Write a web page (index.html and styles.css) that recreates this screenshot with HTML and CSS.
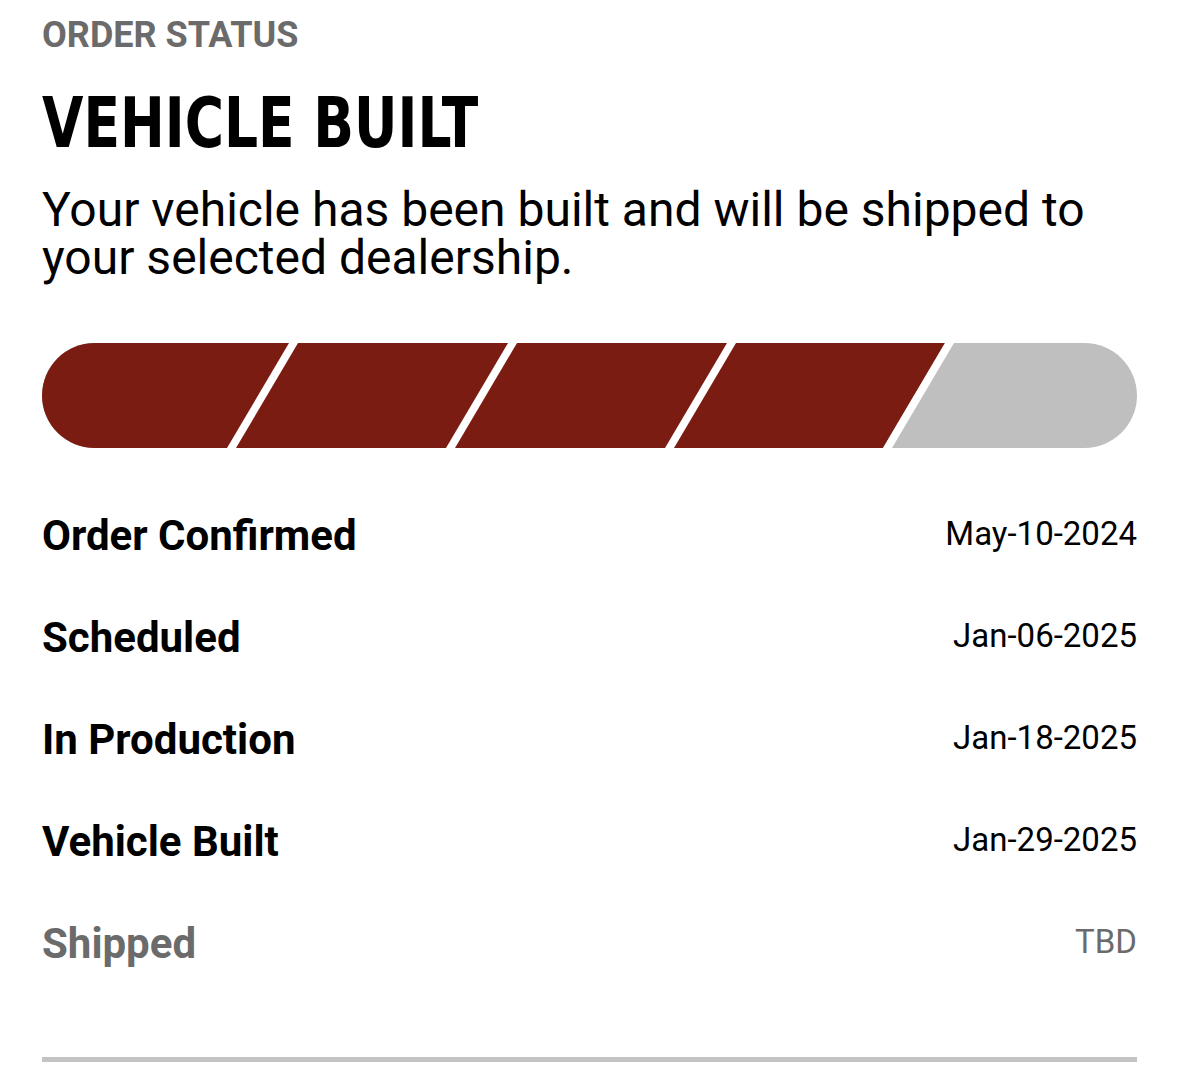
FILE: index.html
```html
<!DOCTYPE html>
<html>
<head>
  <title>Order Status</title>
  <meta charset="UTF-8">
  <link rel="stylesheet" href="styles.css">
</head>
<body>
  <div class="page">
    <div class="eyebrow">ORDER STATUS</div>
    <h1 class="status-title">VEHICLE BUILT</h1>
    <p class="status-text">Your vehicle has been built and will be shipped to your selected dealership.</p>

    <!-- progress: 4 of 5 steps done -->
    <div class="progress">
      <svg width="1095" height="105" viewBox="0 0 1095 105">
        <defs>
          <clipPath id="pill">
            <rect x="0" y="0" width="1095" height="105" rx="52.5" ry="52.5"/>
          </clipPath>
        </defs>
        <g clip-path="url(#pill)">
          <rect x="0" y="0" width="1095" height="105" fill="#bfbfbf"/>
          <polygon points="0,0 903,0 841,105 0,105" fill="#7b1c12"/>
          <polygon points="247,0 256,0 194,105 185,105" fill="#fff"/>
          <polygon points="466,0 475,0 413,105 404,105" fill="#fff"/>
          <polygon points="685,0 694,0 632,105 623,105" fill="#fff"/>
          <polygon points="903,0 912,0 850,105 841,105" fill="#fff"/>
        </g>
      </svg>
    </div>

    <div class="steps">
      <div class="step">
        <span class="step-name">Order Confirmed</span>
        <span class="step-date">May-10-2024</span>
      </div>
      <div class="step">
        <span class="step-name">Scheduled</span>
        <span class="step-date">Jan-06-2025</span>
      </div>
      <div class="step">
        <span class="step-name">In Production</span>
        <span class="step-date">Jan-18-2025</span>
      </div>
      <div class="step">
        <span class="step-name">Vehicle Built</span>
        <span class="step-date">Jan-29-2025</span>
      </div>
      <div class="step pending">
        <span class="step-name">Shipped</span>
        <span class="step-date">TBD</span>
      </div>
    </div>

    <div class="divider"></div>
  </div>
</body>
</html>
```

FILE: styles.css
```css
body {
  margin: 0;
  background: #fff;
  font-family: Roboto, "Noto Sans", sans-serif;
  color: #000;
}

.page {
  padding: 14px 42px 0 42px;
}

.eyebrow {
  font-size: 36px;
  font-weight: 700;
  color: #6b6b6b;
  line-height: 42px;
}

/* no narrow face installed, squeeze the condensed one */
.status-title {
  margin: 27px 0 0 0;
  font-family: "DejaVu Sans Condensed", "DejaVu Sans", sans-serif;
  font-size: 70px;
  font-weight: 700;
  line-height: 80px;
  transform: scaleX(0.85);
  transform-origin: left center;
}

.status-text {
  margin: 23px 0 0 0;
  font-size: 48px;
  line-height: 48px;
}

.progress {
  margin-top: 61px;
  height: 105px;
}

.progress svg {
  display: block;
}

.steps {
  margin-top: 36px;
}

.step {
  display: flex;
  justify-content: space-between;
  align-items: center;
  height: 102px;
}

.step-name {
  font-size: 42px;
  font-weight: 700;
}

.step-date {
  font-size: 33px;
  margin-bottom: 4px;
}

.step.pending .step-name,
.step.pending .step-date {
  color: #6b6b6b;
}

.divider {
  margin-top: 63px;
  height: 5px;
  background: #c4c4c4;
}
```
